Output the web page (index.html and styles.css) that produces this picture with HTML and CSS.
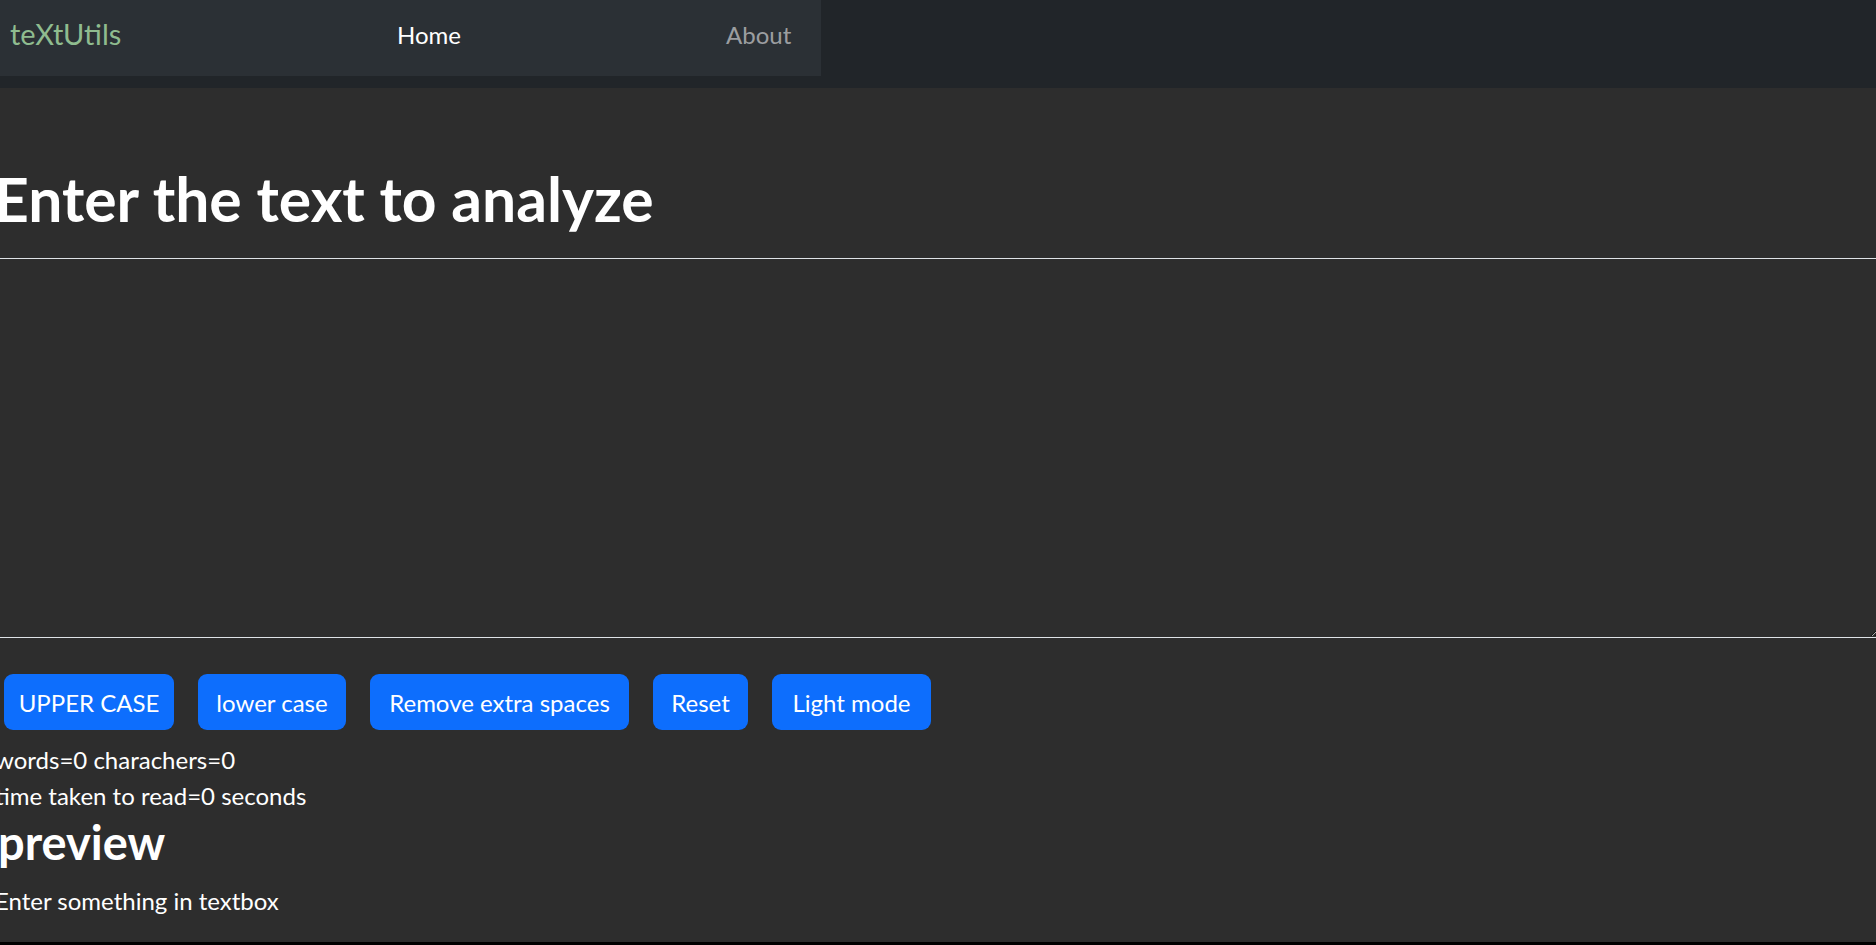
FILE: index.html
```html
<!DOCTYPE html>
<html lang="en">
<head>
<meta charset="utf-8">
<title>teXtUtils</title>
<link rel="stylesheet" href="styles.css">
</head>
<body>
<nav class="navbar">
  <div class="nav-inner">
    <a class="brand" href="#">teXtUtils</a>
    <a class="nav-link active" href="#">Home</a>
    <a class="nav-link" href="#">About</a>
  </div>
</nav>
<main class="page">
  <div class="container">
    <h1 class="title">Enter the text to analyze</h1>
    <textarea class="textbox" rows="8"></textarea>
    <div class="actions">
      <button class="btn">UPPER CASE</button>
      <button class="btn">lower case</button>
      <button class="btn">Remove extra spaces</button>
      <button class="btn">Reset</button>
      <button class="btn">Light mode</button>
    </div>
    <p class="line first">words=0 charachers=0</p>
    <p class="line">time taken to read=0 seconds</p>
    <h2 class="subtitle">preview</h2>
    <p class="line">Enter something in textbox</p>
  </div>
</main>
</body>
</html>
```
FILE: styles.css
```css
* { box-sizing: border-box; }
html { background: #000; }
body {
  margin: 0;
  font-family: Lato, "Open Sans", sans-serif;
  color: #fff;
}
.navbar {
  background: #212529;
  height: 88px;
}
.nav-inner {
  width: 821px;
  height: 76px;
  background: #2b3035;
  display: grid;
  grid-template-columns: 387px 329px auto;
  align-items: start;
  padding: 17px 0 0 10px;
}
.brand {
  color: #8fbc8f;
  font-size: 29px;
  line-height: 34px;
  text-decoration: none;
}
.nav-link {
  color: rgba(255, 255, 255, .55);
  font-size: 24px;
  line-height: 36px;
  text-decoration: none;
}
.nav-link.active { color: #fff; }
.page {
  background: #2d2d2d;
  min-height: calc(100vh - 91px);
  overflow: hidden;
}
.container {
  margin-left: -2px;
  width: calc(100% + 6px);
  padding-top: 75px;
  padding-bottom: 10px;
}
.title {
  margin: 0 0 23px -4px;
  font-size: 60.6px;
  font-weight: 700;
  line-height: 72px;
}
.textbox {
  display: block;
  width: 100%;
  height: 380px;
  margin: 0;
  background: #2d2d2d;
  border: 1px solid #dee2e6;
  color: #fff;
  resize: vertical;
}
.actions {
  display: grid;
  grid-template-columns: 170px 148px 259px 95px 159px;
  gap: 24px;
  padding: 36px 0 0 6px;
}
.btn {
  height: 56px;
  padding: 0;
  border: none;
  border-radius: 9px;
  background: #0d6efd;
  color: #fff;
  font-family: inherit;
  font-size: 24px;
  text-align: center;
}
.line {
  margin: 0 0 0 -3px;
  font-size: 24px;
  line-height: 36px;
}
.line.first { margin-top: 12px; }
.subtitle {
  margin: 0 0 12px;
  font-size: 47px;
  font-weight: 700;
  line-height: 57px;
}
```
